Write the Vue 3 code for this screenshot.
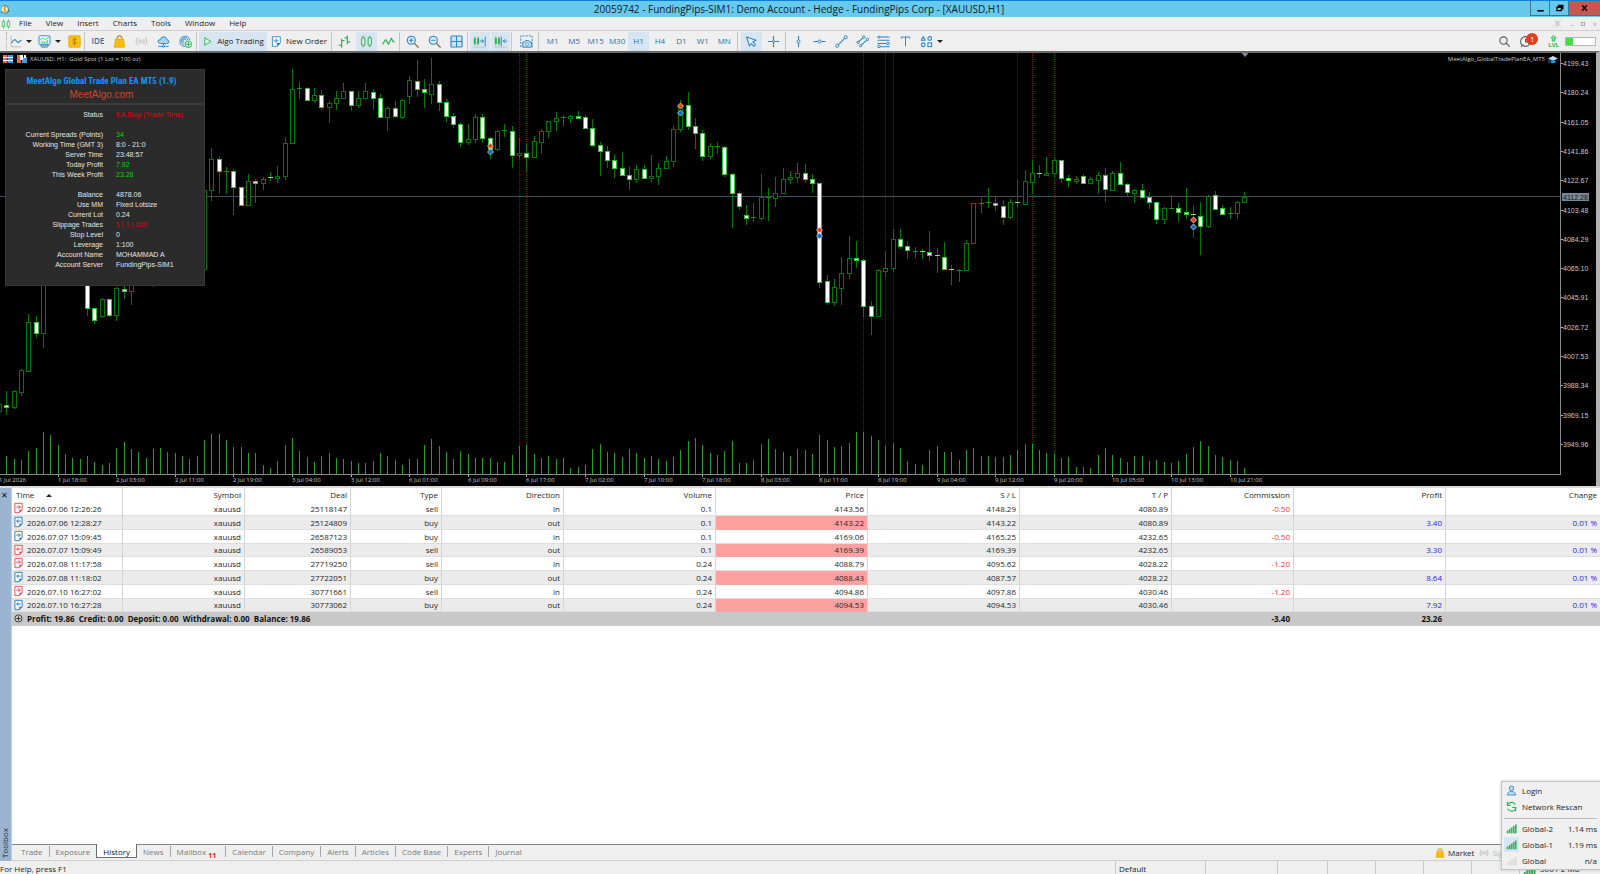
<script setup>
const B = '#2f86c6'
const G = '#2fb457'

const line = (d, c = B, w = 1.3) =>
  `<path d="${d}" fill="none" stroke="${c}" stroke-width="${w}" stroke-linecap="round" stroke-linejoin="round"/>`
const dot = (x, y, r = 1.5, c = B) =>
  `<circle cx="${x}" cy="${y}" r="${r}" fill="#efefef" stroke="${c}" stroke-width="1.2"/>`

const bag =
  '<path d="M5 6V4a3 3 0 0 1 6 0v2" fill="none" stroke="#c99000" stroke-width="1.4"/><path d="M3 5h10l1.500 10h-13z" fill="#f8bc10" stroke="#e0a300" stroke-width=".8"/>'
const waves = (c) =>
  line('M3 3.500Q-.500 8 3 12.500M5.300 5.300Q3.300 8 5.300 10.700M13 3.500Q16.500 8 13 12.500M10.700 5.300Q12.700 8 10.700 10.700', c, 1.1) +
  `<circle cx="8" cy="8" r="1.300" fill="none" stroke="${c}"/>`

const icons = {
  lineChart: line('M2.500 1.500V14.500H15', '#b5b5b5', 1) + line('M3 9.500L7 5.500L11 9.500L15 6.500'),
  screen:
    `<rect x="1.200" y="1" width="13.600" height="11" rx="1.500" fill="#fff" stroke="${B}" stroke-width="1.200"/><path d="M3 12.500h10l-1.500 2.500h-7z" fill="#a8c9e3" stroke="${B}"/>` +
    line('M3 6L6 4L9 5.500L13 2.800', G, 1) + line('M4 10.500v-2M6 10.500v-3M8 10.500v-2M10 10.500v-3M12 10.500v-4', G, 1),
  dollar:
    '<rect x="1" y="1" width="14" height="14" rx="1.500" fill="#fcc20a" stroke="#e3a300"/>' +
    line('M10.500 5.500Q8 4 6 5.500Q5 7.500 8 8Q11 8.500 10 10.500Q8 12 5.500 10.500M8 3.500v9', '#b87c00', 1.1),
  bag,
  signal: waves('#b3b3b3'),
  cloud:
    '<path d="M4 10.500Q1 10 1.200 7.500Q1.800 5.500 4 5.800Q5 2 8.500 2.200Q11.800 2.500 12 5.800Q15 5.800 14.800 8.400Q14.400 10.500 12 10.500z" fill="#a9d7f3" stroke="#2f86c6" stroke-width="1.200"/>' +
    line('M8 10.500v3M2 14h12', B, 1.2) + dot(8, 14, 1.2),
  radar:
    line('M13.500 6A6.300 6.300 0 1 0 7 14.200M11.200 6A4.200 4.200 0 1 0 6 11.500M8.800 6.500A2 2 0 1 0 6.300 9', B, 1.2) +
    `<circle cx="11.500" cy="11.500" r="4" fill="#dff4e4" stroke="${G}" stroke-width="1.200"/>` + line('M11.500 9.300v4.400M9.300 11.500h4.400', G),
  play: '<path d="M4 2.500L13 8L4 13.500z" fill="#e4f6e8" stroke="#2fb457" stroke-width="1.400" stroke-linejoin="round"/>',
  newOrder:
    '<path d="M2 1h11.500v9L9 15H2z" fill="#fff" stroke="#2f86c6" stroke-width="1.300" stroke-linejoin="round"/><path d="M13.500 10L9 15v-5z" fill="#1a5f97"/>' +
    line('M7.500 4v6M4.500 7h6', B),
  bars: line('M4.500 5v10M1.500 12.500h3M4.500 7h3M11.500 1v10M8.500 3.500h3M11.500 8.500h3', G, 1.5),
  candles:
    `<path d="M4 1v14M12 1v14" stroke="${G}" stroke-width="1.200"/><rect x="2" y="3.500" width="4" height="9" rx="1" fill="#e4f4e6" stroke="${G}" stroke-width="1.300"/><rect x="10" y="3.500" width="4" height="9" rx="1" fill="#e4f4e6" stroke="${G}" stroke-width="1.300"/>`,
  zigzag: line('M1 11L4.500 5.500L8 11.500L11.500 4L14 8.500L15 8', G, 1.5),
  zoomIn:
    `<circle cx="6.500" cy="6.500" r="5" fill="#dcecf8" stroke="${B}" stroke-width="1.300"/>` + line('M10.500 10.500L15 15', '#9a6b5a', 1.6) + line('M6.500 4.300v4.400M4.300 6.500h4.400'),
  zoomOut:
    `<circle cx="6.500" cy="6.500" r="5" fill="#dcecf8" stroke="${B}" stroke-width="1.300"/>` + line('M10.500 10.500L15 15', '#9a6b5a', 1.6) + line('M4.300 6.500h4.400'),
  grid: `<rect x="1.200" y="1.200" width="13.600" height="13.600" rx="1" fill="#cfe3f5" stroke="${B}" stroke-width="1.400"/>` + line('M8 1.500v13M1.500 8h13'),
  shiftRight:
    `<rect x="1" y="4" width="2.500" height="7" fill="${G}"/><rect x="5" y="4" width="2.500" height="7" fill="${G}"/>` +
    line('M2.200 2.500v10M6.200 2.500v10', G, 1) + line('M9 7.500h4M11 5.500l2 2l-2 2M15 2.500v11', B, 1.2) + line('M0 15h16', '#b9c3cc', 1),
  shiftLeft:
    `<rect x="1" y="4" width="2.500" height="7" fill="${G}"/><rect x="5" y="4" width="2.500" height="7" fill="${G}"/>` +
    line('M2.200 2.500v10M6.200 2.500v10', G, 1) + line('M9 2.500v11M11.500 7.500h4M13.500 5.500l-2 2l2 2', B, 1.2) + line('M0 15h16', '#b9c3cc', 1),
  camera:
    `<path d="M1 15V1h14v14" fill="none" stroke="${B}" stroke-width="1.200" stroke-dasharray="2.500 1.500"/><path d="M3.500 8.500h2.500l1-1.700h3.500l1 1.700H14v6.500H3.500z" fill="#cfe3f5" stroke="${B}" stroke-width="1.200"/><circle cx="8.700" cy="11.500" r="1.800" fill="#fff" stroke="${B}"/>`,
  cursor: `<path d="M2 2.500L13.500 6.500L9.500 8.500L13 12L11 14L7.700 10.500L5.500 13.500z" fill="#e8f2fa" stroke="${B}" stroke-width="1.300" stroke-linejoin="round"/>`,
  cross: line('M8 1.500v13M1.500 8h13', B, 1.4) + dot(8, 8, 1.2),
  vline: line('M8 1.500v13') + dot(8, 8, 1.9),
  hline: line('M1 8h14') + dot(8, 8, 1.9),
  trend: line('M3 13L13 3') + dot(2.8, 13.2, 1.9) + dot(13.2, 2.8, 1.9),
  channel: line('M2.500 9L9.500 2.500M5.500 13.500L14.500 5') + dot(9.5, 2.7) + dot(2.5, 9) + dot(5.5, 13.2) + dot(14, 5.5),
  fib: line('M1 2.500h14M1 6.500h14M1 10.500h14M1 14.500h14') + dot(13.5, 10.5, 1.6) + dot(2.5, 14, 1.6) + dot(2.5, 2.5, 1.2),
  text: line('M3 4V2.500H13V4M8 2.500v11', B, 1.2),
  shapes:
    line('M4 2L6.500 6.500H1.500z') + `<circle cx="12" cy="4.300" r="2.300" fill="none" stroke="${B}" stroke-width="1.300"/><circle cx="4" cy="12" r="2.300" fill="none" stroke="${B}" stroke-width="1.300"/><rect x="9.700" y="9.700" width="4.600" height="4.600" fill="none" stroke="${B}" stroke-width="1.300"/>`,
  search: line('M10 10L14 14', '#555', 1.4) + '<circle cx="6.800" cy="6.800" r="4.500" fill="none" stroke="#555" stroke-width="1.300"/>',
  chat: '<circle cx="8" cy="8" r="6" fill="#f6f6f6" stroke="#555" stroke-width="1.300"/>' + line('M3 14.500L5 12M8 5v3.500h3', '#555'),
  pin: line('M8 2v4M5 6h6M5 9h6M8 9v5M2 2l12 12M14 2L2 14', '#b8b8b8', 1),
  user:
    '<circle cx="8" cy="4.800" r="3.300" fill="#bfe0f5" stroke="#2f86c6" stroke-width="1.300"/><path d="M2 14.500Q2 9.500 8 9.500Q14 9.500 14 14.500z" fill="#bfe0f5" stroke="#2f86c6" stroke-width="1.300"/>',
  rescan: line('M2 6.500A6.200 6.200 0 0 1 13 4.500M14.500 9.500A6.200 6.200 0 0 1 3 11.500M2 2v4.500h4.500M14 14v-4.500H9.500', G, 1.6),
}

const ladder = (c) => [1, 4, 7, 10, 13].map((x, i) => `<rect x="${x}" y="${11 - i * 2.2}" width="2.400" height="${4 + i * 2.2}" fill="${c}"/>`).join('')
icons.strength = ladder('#2fb457')
icons.strengthOff = ladder('#dcdcdc')

const menus = ['File', 'View', 'Insert', 'Charts', 'Tools', 'Window', 'Help']
const timeframes = ['M1', 'M5', 'M15', 'M30', 'H1', 'H4', 'D1', 'W1', 'MN']
const drawTools = ['vline', 'hline', 'trend', 'channel', 'fib', 'text', 'shapes']

/* Candles: high, body top, body bottom, low, fill (1 = bearish). Three units per pixel. */
const candles = [
  [1063,1063,1084,1084,0],[1024,1064,1071,1094,1],[1020,1024,1071,1078,0],[958,961,1025,1039,0],[793,815,963,965,0],[799,815,850,864,1],
  [560,600,850,895,0],[500,520,600,620,0],[480,500,520,560,1],[480,500,540,560,1],[500,520,560,580,0],[520,540,600,620,1],
  [560,600,775,797,1],[773,775,811,823,1],[745,747,799,803,0],[746,748,795,800,1],[712,715,794,814,0],[700,716,724,747,1],
  [660,680,724,765,0],[640,660,680,700,0],[600,640,660,690,0],[600,640,660,711,1],[580,600,660,680,0],[560,580,600,640,0],
  [540,560,580,620,0],[560,580,620,660,1],[580,600,640,660,0],[600,620,656,670,0],[420,420,656,656,0],
  [294,327,419,453,0],[322,327,364,432,1],[350,364,367,431,0],[358,364,412,494,1],[412,412,465,468,1],[371,392,465,469,0],
  [386,393,398,460,1],[382,387,399,421,0],[367,381,384,392,1],[347,377,383,398,0],[262,280,377,391,0],[58,118,280,282,0],
  [97,113,118,146,0],[110,115,150,152,1],[115,136,150,158,0],[120,136,170,180,1],[152,160,170,220,0],[123,143,160,180,0],
  [99,123,143,146,0],[122,124,166,182,1],[123,143,166,173,0],[100,123,143,151,0],[116,126,143,179,1],[133,143,200,202,1],
  [167,175,200,243,0],[154,175,199,203,1],[148,151,200,208,0],[77,91,139,162,0],[30,93,116,141,1],[88,116,125,174,1],
  [24,102,132,163,0],[94,102,156,182,1],[147,156,197,216,1],[190,197,223,233,1],[217,222,275,290,1],[222,266,275,286,0],
  [191,200,266,279,0],[193,200,265,279,1],[262,264,298,327,1],[239,243,298,302,0],[223,241,244,261,0],[228,242,314,353,1],
  [264,309,314,327,0],[280,308,321,366,1],[257,274,322,323,0],[238,244,275,311,0],[213,214,244,265,0],[186,203,214,242,0],
  [196,202,205,227,0],[196,198,203,218,0],[183,199,203,204,1],[196,202,234,237,1],[208,234,285,290,1],[277,285,304,377,1],
  [289,304,329,353,1],[313,329,353,384,1],[306,353,375,377,1],[351,375,386,419,1],[346,356,388,398,0],[344,356,383,384,1],
  [315,377,383,397,0],[340,353,377,404,0],[318,332,353,354,0],[229,236,332,350,0],[151,166,236,246,0],[127,166,228,239,1],
  [205,227,248,296,1],[240,248,317,333,1],[280,289,317,326,0],[276,289,292,311,0],[288,291,373,381,1],[369,373,430,533,1],
  [424,430,469,480,1],[466,496,505,524,1],[460,502,505,516,0],[372,442,503,511,0],[413,441,444,514,0],[382,430,443,470,0],
  [353,388,430,431,0],[364,381,388,402,0],[339,368,381,398,0],[341,369,387,395,1],[372,388,399,429,1],[399,399,695,715,1],
  [676,694,756,766,1],[687,712,756,769,0],[622,670,713,766,0],[558,624,670,686,0],[573,625,629,655,1],[627,629,767,800,1],
  [753,767,797,855,1],[658,661,798,801,0],[603,654,664,681,0],[536,568,654,662,0],[536,568,587,596,1],[573,587,599,628,1],
  [590,602,605,624,0],[598,604,607,627,1],[543,607,614,633,1],[593,615,619,669,1],[575,620,656,658,1],[645,658,661,706,1],
  [658,659,661,696,0],[569,578,660,663,0],[459,459,578,582,0],[444,458,461,490,0],[415,457,460,473,0],[439,458,466,482,1],
  [450,467,500,525,1],[448,457,502,507,0],[391,456,460,470,1],[361,394,462,465,0],[331,369,395,432,0],[345,369,373,383,1],
  [322,368,374,378,0],[322,329,369,380,0],[330,330,383,398,1],[374,384,391,411,1],[379,388,392,402,0],[373,378,398,399,1],
  [380,388,398,402,0],[365,374,390,431,0],[353,376,418,456,1],[364,369,419,423,0],[336,369,403,406,1],[399,403,426,442,1],
  [418,420,428,459,0],[403,420,442,446,1],[427,442,455,477,1],[455,455,506,521,1],[470,475,507,522,0],[436,474,477,477,0],
  [458,474,486,515,1],[415,486,492,508,1],[465,491,496,563,1],[455,497,529,615,1],[434,437,529,535,0],[424,436,476,476,1],
  [465,475,493,493,1],[471,490,493,506,0],[454,457,490,507,0],[427,440,457,459,0],
]

const volumes = [
  40,53,45,42,70,79,127,116,86,60,49,45,54,36,27,32,78,95,75,66,47,75,78,66,62,53,44,53,103,121,120,101,81,80,64,62,27,18,38,87,109,
  70,50,35,54,64,48,45,40,33,32,39,63,53,42,28,46,45,87,104,85,66,45,69,60,48,48,48,35,36,58,83,88,60,48,54,46,49,18,22,27,75,90,67,
  64,51,75,62,48,53,46,40,51,71,98,109,86,64,58,69,100,33,33,42,91,106,76,67,54,75,73,60,117,101,80,83,93,126,126,114,102,84,92,79,39,
  29,28,73,85,66,66,43,72,78,55,55,51,51,57,71,91,91,72,63,61,49,51,21,21,18,57,78,57,47,36,53,53,39,43,35,32,38,60,80,98,83,58,50,42,40,19,
]

const STEP = 7.325
const px = (i) => Math.round(STEP * i - 1)
const py = (v) => Math.round(v / 3) - 3
const BASE = 421

const bars = candles.map(([h, t, b, l, fill], i) => {
  const top = py(t)
  return { x: px(i), high: py(h), top, h: Math.max(py(b) - top, 1), bottom: Math.max(py(b), top + 1), low: py(l), fill }
})
const volumeBars = volumes.map((v, i) => ({ x: px(i), y: BASE - Math.round(v / 3) }))
const sessions = [71, 72, 118, 121, 122, 139, 141, 144].map(px)
const trades = [[67, 287, 307], [93, 169, 188], [112, 539, 558], [163, 511, 531]].map(([i, a, b]) => ({ x: px(i), sell: py(a), buy: py(b) }))

const times = ['1 Jul 2026','1 Jul 18:00','2 Jul 03:00','2 Jul 11:00','2 Jul 19:00','3 Jul 04:00','3 Jul 12:00','6 Jul 01:00','6 Jul 09:00','6 Jul 17:00','7 Jul 02:00','7 Jul 10:00','7 Jul 18:00','8 Jul 03:00','8 Jul 11:00','8 Jul 19:00','9 Jul 04:00','9 Jul 12:00','9 Jul 20:00','10 Jul 05:00','10 Jul 13:00','10 Jul 21:00']
  .map((label, k) => ({ label, x: px(k * 8) }))
const prices = ['4199.43','4180.24','4161.05','4141.86','4122.67','4103.48','4084.29','4065.10','4045.91','4026.72','4007.53','3988.34','3969.15','3949.96']
  .map((label, k) => ({ label, y: Math.round(11 + k * 29.3) }))

const panel = [
  ['Status', 'EA Stop (Trade Time)', 'red'], null,
  ['Current Spreads (Points)', '34', 'green'],
  ['Working Time (GMT 3)', '8:0 - 21:0'],
  ['Server Time', '23:48:57'],
  ['Today Profit', '7.92', 'green'],
  ['This Week Profit', '23.26', 'green'], null,
  ['Balance', '4878.06'],
  ['Use MM', 'Fixed Lotsize'],
  ['Current Lot', '0.24'],
  ['Slippage Trades', '1 | 1 | 100', 'red'],
  ['Stop Level', '0'],
  ['Leverage', '1:100'],
  ['Account Name', 'MOHAMMAD A'],
  ['Account Server', 'FundingPips-SIM1'],
]

const columns = ['Symbol', 'Deal', 'Type', 'Direction', 'Volume', 'Price', 'S / L', 'T / P', 'Commission', 'Profit', 'Change']
const deals = [
  ['2026.07.06 12:26:26', '25118147', 'sell', 'in', '0.1', '4143.56', '4148.29', '4080.89', '-0.50', '', ''],
  ['2026.07.06 12:28:27', '25124809', 'buy', 'out', '0.1', '4143.22', '4143.22', '4080.89', '', '3.40', '0.01 %'],
  ['2026.07.07 15:09:45', '26587123', 'buy', 'in', '0.1', '4169.06', '4165.25', '4232.65', '-0.50', '', ''],
  ['2026.07.07 15:09:49', '26589053', 'sell', 'out', '0.1', '4169.39', '4169.39', '4232.65', '', '3.30', '0.01 %'],
  ['2026.07.08 11:17:58', '27719250', 'sell', 'in', '0.24', '4088.79', '4095.62', '4028.22', '-1.20', '', ''],
  ['2026.07.08 11:18:02', '27722051', 'buy', 'out', '0.24', '4088.43', '4087.57', '4028.22', '', '8.64', '0.01 %'],
  ['2026.07.10 16:27:02', '30771661', 'sell', 'in', '0.24', '4094.86', '4097.86', '4030.46', '-1.20', '', ''],
  ['2026.07.10 16:27:28', '30773062', 'buy', 'out', '0.24', '4094.53', '4094.53', '4030.46', '', '7.92', '0.01 %'],
]

const tabs = ['Trade', 'Exposure', 'History', 'News', 'Mailbox', 'Calendar', 'Company', 'Alerts', 'Articles', 'Code Base', 'Experts', 'Journal']
const servers = [
  { name: 'Global-2', ping: '1.14 ms', icon: 'strength' },
  { name: 'Global-1', ping: '1.19 ms', icon: 'strength', on: true },
  { name: 'Global', ping: 'n/a', icon: 'strengthOff' },
]
</script>

<template>
  <div class="app">
    <header class="titlebar">
      <svg class="coin" viewBox="0 0 16 16" aria-hidden="true">
        <path d="M2 14L3 5L8 1L13 4L15 12L10 15z" fill="#2d6f8f" />
        <circle cx="7.500" cy="8.500" r="5.500" fill="#fff3cf" stroke="#c8962a" />
        <path d="M9.500 6Q7.500 5 6 6.300Q5.500 8 7.700 8.500Q10 9.200 9 11Q7.500 12 5.500 11M7.500 4.500v8" fill="none" stroke="#b8801a" stroke-width="1.200" />
      </svg>
      <h1>20059742 - FundingPips-SIM1: Demo Account - Hedge - FundingPips Corp - [XAUUSD,H1]</h1>
      <div class="winbtns">
        <button aria-label="Minimize"><svg viewBox="0 0 10 10"><path d="M1 7.500h8v2H1z" /></svg></button>
        <button aria-label="Restore"><svg viewBox="0 0 10 10"><path d="M3 1h7v6H8v2H1V3h2zM2.500 5v2.500h4V5z" fill-rule="evenodd" /></svg></button>
        <button class="close" aria-label="Close"><svg viewBox="0 0 10 10"><path d="M2 1.500l6 7M8 1.500l-6 7" stroke="#111" stroke-width="2" /></svg></button>
      </div>
    </header>

    <nav class="menubar">
      <svg class="ico" viewBox="0 0 16 16" v-html="icons.candles" />
      <button v-for="m in menus" :key="m">{{ m }}</button>
      <div class="mdi">
        <button aria-label="Unpin"><svg class="ico" viewBox="0 0 16 16" v-html="icons.pin" /></button>
        <button aria-label="Minimize chart">–</button>
        <button aria-label="Restore chart"><i class="restore"></i></button>
        <button aria-label="Close chart">×</button>
      </div>
    </nav>

    <div class="toolbar">
      <span class="grip"></span>
      <div class="g charts">
        <button aria-label="Chart type"><svg class="ico" viewBox="0 0 16 16" v-html="icons.lineChart" /><i class="caret"></i></button>
        <button aria-label="Profiles"><svg class="ico" viewBox="0 0 16 16" v-html="icons.screen" /><i class="caret"></i></button>
        <button aria-label="Symbols"><svg class="ico" viewBox="0 0 16 16" v-html="icons.dollar" /></button>
      </div>
      <div class="g services">
        <button class="tf ide">IDE</button>
        <button v-for="n in ['bag', 'signal', 'cloud', 'radar']" :key="n" :aria-label="n"><svg class="ico" viewBox="0 0 16 16" v-html="icons[n]" /></button>
      </div>
      <div class="g trading">
        <button class="on"><svg class="ico small" viewBox="0 0 16 16" v-html="icons.play" />Algo Trading</button>
        <button><svg class="ico small" viewBox="0 0 16 16" v-html="icons.newOrder" />New Order</button>
      </div>
      <div class="g three">
        <button v-for="n in ['bars', 'candles', 'zigzag']" :key="n" :class="{ on: n === 'candles' }" :aria-label="n"><svg class="ico" viewBox="0 0 16 16" v-html="icons[n]" /></button>
      </div>
      <div class="g three">
        <button v-for="n in ['zoomIn', 'zoomOut', 'grid']" :key="n" :aria-label="n"><svg class="ico" viewBox="0 0 16 16" v-html="icons[n]" /></button>
      </div>
      <div class="g two">
        <button v-for="n in ['shiftRight', 'shiftLeft']" :key="n" class="on" :aria-label="n"><svg class="ico" viewBox="0 0 16 16" v-html="icons[n]" /></button>
      </div>
      <div class="g one">
        <button aria-label="Screenshot"><svg class="ico" viewBox="0 0 16 16" v-html="icons.camera" /></button>
      </div>
      <div class="g frames">
        <button v-for="t in timeframes" :key="t" class="tf" :class="{ on: t === 'H1' }">{{ t }}</button>
      </div>
      <div class="g two">
        <button v-for="n in ['cursor', 'cross']" :key="n" :class="{ on: n === 'cursor' }" :aria-label="n"><svg class="ico" viewBox="0 0 16 16" v-html="icons[n]" /></button>
      </div>
      <div class="g draw">
        <button v-for="n in drawTools" :key="n" :aria-label="n"><svg class="ico" viewBox="0 0 16 16" v-html="icons[n]" /></button>
      </div>
      <i class="caret"></i>
      <div class="right">
        <button aria-label="Search"><svg class="ico" viewBox="0 0 16 16" v-html="icons.search" /></button>
        <button class="chat" aria-label="Messages"><svg class="ico" viewBox="0 0 16 16" v-html="icons.chat" /><b>1</b></button>
        <span class="lvl"><svg viewBox="0 0 10 8"><path d="M5 .500L8 3.500H6.300V7H3.700V3.500H2z" fill="#9be0a8" stroke="#2fb457" /></svg>LVL</span>
        <span class="meter"><i></i></span>
      </div>
    </div>

    <main class="chart">
      <div class="plotrow">
        <div class="plotwrap">
          <svg class="plot" aria-label="XAUUSD H1 candles" role="img">
            <line v-for="x in sessions" :key="'s' + x" :x1="x + 0.5" :x2="x + 0.5" y1="0" :y2="BASE" class="session" />
            <line x1="0" x2="100%" y1="143.500" y2="143.500" class="bid" />
            <rect v-for="v in volumeBars" :key="'v' + v.x" :x="v.x" :y="v.y" width="1" :height="BASE - v.y" fill="#23a023" />
            <g v-for="b in bars" :key="b.x">
              <rect :x="b.x" :y="b.high" width="1" :height="Math.max(b.top - b.high, 0)" fill="#007a00" />
              <rect :x="b.x" :y="b.bottom" width="1" :height="Math.max(b.low - b.bottom, 0)" fill="#007a00" />
              <rect v-if="b.fill && b.h > 1" :x="b.x - 1.500" :y="b.top + 0.500" width="4" :height="b.h" fill="#fff" stroke="#2fc42f" />
              <rect v-else-if="b.h > 1" :x="b.x - 1.500" :y="b.top + 0.500" width="4" :height="b.h" fill="#000" stroke="#007a00" />
              <rect v-else :x="b.x - 2" :y="b.top" width="5" height="1" :fill="b.fill ? '#7fe07f' : '#00a000'" />
            </g>
            <g v-for="t in trades" :key="'t' + t.x">
              <path :d="`M${t.x + 0.5} ${t.sell - 3}l3 3l-3 3l-3-3z`" fill="#e8401c" stroke="#f3c9bb" stroke-width=".8" />
              <path :d="`M${t.x + 0.5} ${t.buy - 3}l3 3l-3 3l-3-3z`" fill="#1668c4" stroke="#b5d3ee" stroke-width=".8" />
            </g>
            <path d="M1241.500 0h7l-3.500 4z" fill="#7b8b9e" />
          </svg>
          <div class="symbol">
            <svg class="flags" viewBox="0 0 24 9" aria-hidden="true">
              <rect width="4.500" height="8" fill="#e8625a" /><rect x="5" width="5" height="8" fill="#3f9be0" />
              <path d="M0 2.500h10M0 5.500h10" stroke="#fff" /><rect x="14" width="4" height="8" fill="#e8625a" />
              <rect x="19" y="2" width="5" height="6" fill="#3f9be0" /><path d="M17 0h3v5h-3zM21 0h2v3h-2z" fill="#fff" />
            </svg>
            XAUUSD, H1:&nbsp; Gold Spot (1 Lot = 100 oz)
          </div>
          <div class="expert">
            MeetAlgo_GlobalTradePlanEA_MT5
            <svg viewBox="0 0 12 10" aria-hidden="true"><path d="M6 0l6 3l-6 3l-6-3z" fill="#bfe4ff" /><path d="M3 5v3q3 2 6 0V5l-3 1.500z" fill="#2a96e8" /><path d="M1 3.500v5" stroke="#2a96e8" /></svg>
          </div>
          <section class="panel">
            <h2>MeetAlgo Global Trade Plan EA MT5 (1.9)</h2>
            <p class="site">MeetAlgo.com</p>
            <dl>
              <div v-for="(r, i) in panel" :key="i" :class="{ gap: !r }">
                <template v-if="r"><dt>{{ r[0] }}</dt><dd :class="r[2]">{{ r[1] }}</dd></template>
              </div>
            </dl>
          </section>
        </div>
        <svg class="prices">
          <g v-for="p in prices" :key="p.label">
            <rect x="0" :y="p.y - 1" width="2" height="1" fill="#aaa" />
            <text x="2" :y="p.y + 2">{{ p.label }}</text>
          </g>
          <rect x="1" y="140" width="27" height="8" fill="#77889a" />
          <text x="2" y="147" class="now">4112.28</text>
        </svg>
      </div>
      <svg class="times">
        <g v-for="t in times" :key="t.label">
          <rect :x="t.x" y="0" width="1" height="2" fill="#aaa" />
          <text :x="t.x" y="7">{{ t.label }}</text>
        </g>
      </svg>
    </main>

    <section class="toolbox">
      <aside class="strip">
        <button aria-label="Close toolbox">✕</button>
        <span>Toolbox</span>
      </aside>
      <div class="body">
        <div class="grid">
          <table>
            <colgroup>
              <col class="w111" /><col class="w122" /><col class="w106" /><col class="w91" /><col class="w122" />
              <col class="w152" /><col class="w152" /><col class="w152" /><col class="w152" /><col class="w122" /><col class="w152" /><col />
            </colgroup>
            <thead>
              <tr><th class="time">Time <i></i></th><th v-for="c in columns" :key="c">{{ c }}</th></tr>
            </thead>
            <tbody>
              <tr v-for="d in deals" :key="d[1]">
                <td class="when" :class="d[2]">
                  <svg viewBox="0 0 10 12" aria-hidden="true">
                    <path d="M1 .800h8v7.200L6 11.200H1z" fill="#fff" stroke="currentColor" />
                    <path d="M9 8L6 11.200V8z" fill="currentColor" />
                    <path :d="d[3] === 'in' ? 'M2.500 5h4.500M5 3l2 2l-2 2' : 'M7.500 5H3M5 3L3 5l2 2'" fill="none" stroke="currentColor" />
                  </svg><span>{{ d[0] }}</span>
                </td>
                <td>xauusd</td><td>{{ d[1] }}</td><td>{{ d[2] }}</td><td>{{ d[3] }}</td><td>{{ d[4] }}</td>
                <td :class="{ hit: d[3] === 'out' }">{{ d[5] }}</td><td>{{ d[6] }}</td><td>{{ d[7] }}</td>
                <td class="loss">{{ d[8] }}</td><td class="gain">{{ d[9] }}</td><td class="gain">{{ d[10] }}</td>
              </tr>
            </tbody>
            <tfoot>
              <tr>
                <td colspan="9" class="sum">
                  <svg viewBox="0 0 10 10" aria-hidden="true"><circle cx="5" cy="5" r="4" fill="none" stroke="#333" /><path d="M5 2.500v5M2.500 5h5" stroke="#333" /></svg>
                  <span>Profit: 19.86&nbsp; Credit: 0.00&nbsp; Deposit: 0.00&nbsp; Withdrawal: 0.00&nbsp; Balance: 19.86</span>
                </td>
                <td>-3.40</td><td>23.26</td><td></td>
              </tr>
            </tfoot>
          </table>
        </div>
        <div class="tabs">
          <button v-for="t in tabs" :key="t" :class="{ active: t === 'History' }">{{ t }}<sub v-if="t === 'Mailbox'">11</sub></button>
          <div class="links">
            <a href="#market"><svg class="ico" viewBox="0 0 16 16" v-html="icons.bag" />Market</a>
            <a href="#signals" class="dim"><svg class="ico" viewBox="0 0 16 16" v-html="icons.signal" />Signals</a>
          </div>
        </div>
      </div>
    </section>

    <footer class="status">
      <span class="help">For Help, press F1</span>
      <span class="c90">Default</span><span class="c72"></span><span class="c50"></span><span class="c48"></span>
      <span class="c48"></span><span class="c48"></span><span class="c48"></span>
      <span class="net"><svg class="ico" viewBox="0 0 16 16" v-html="icons.strength" />500 / 2 Mb</span>
    </footer>

    <div class="popup">
      <button><svg class="ico" viewBox="0 0 16 16" v-html="icons.user" />Login</button>
      <button><svg class="ico" viewBox="0 0 16 16" v-html="icons.rescan" />Network Rescan</button>
      <hr />
      <button v-for="s in servers" :key="s.name" :class="{ sel: s.on }">
        <svg class="ico" viewBox="0 0 16 16" v-html="icons[s.icon]" />{{ s.name }}<em>{{ s.ping }}</em>
      </button>
    </div>
  </div>
</template>

<style>
html, body { margin: 0; overflow: hidden; }
</style>

<style scoped>
.app {
  position: relative; display: flex; flex-direction: column; height: 100vh; overflow: hidden;
  background: #efefef; color: #1c1c1c; font: 8px/12px "Open Sans", "Noto Sans", sans-serif;
}
.app * { box-sizing: border-box; }
button { border: 0; padding: 0; margin: 0; background: none; font: inherit; color: inherit; }
svg { display: block; flex: none; }
.ico { width: 13px; height: 13px; }
.small { width: 11px; height: 11px; }

.titlebar { flex: none; display: flex; align-items: center; height: 17px; border-top: 1px solid #0c80d8; background: #67caec; }
.coin { width: 10px; height: 12px; }
h1 { flex: 1; margin: 0; padding-left: 58px; font-size: 10px; line-height: 16px; font-weight: 400; text-align: center; color: #10202a; white-space: nowrap; }
.winbtns { display: flex; align-self: flex-start; }
.winbtns button { width: 19px; height: 15px; display: grid; place-items: center; border: 1px solid #35788f; border-top: 0; border-right: 0; }
.winbtns .close { width: 32px; background: #c75850; }
.winbtns svg { width: 9px; height: 8px; }

.menubar { flex: none; display: flex; align-items: center; height: 14px; border-bottom: 1px solid #cfcfcf; }
.menubar .ico { width: 10px; height: 10px; margin: 0 1px; }
.menubar > button { padding: 0 7px 1px; }
.mdi { margin-left: auto; display: flex; align-items: center; gap: 7px; padding-right: 3px; color: #a8a8a8; }
.mdi .ico { width: 9px; height: 9px; }
.restore { display: block; width: 4px; height: 4px; border: 1px solid #a8a8a8; }

.toolbar { flex: none; display: flex; align-items: center; height: 20px; }
.grip { width: 7px; height: 18px; border-right: 1px dotted #aaa; }
.g { display: grid; grid-auto-flow: column; grid-auto-columns: 1fr; height: 19px; padding-left: 2px; border-right: 1px solid #c4c4c4; }
.g button { display: flex; align-items: center; justify-content: center; gap: 4px; white-space: nowrap; }
.g .on { background: #d7e4f1; }
.charts { width: 78px; padding-left: 0; grid-template-columns: 27px 30px 20px; }
.services { width: 112px; }
.trading { width: 135px; grid-template-columns: 68px 64px; grid-auto-columns: auto; }
.three { width: 68px; }
.two { width: 44px; }
.two button { margin-right: 1px; }
.one { width: 27px; }
.frames { width: 199px; padding-left: 3px; padding-right: 2px; }
.frames + .two { width: 48px; padding-left: 3px; }
.tf { color: #2b6fa3; }
.ide { font-weight: 600; }
.draw { width: 151px; border: 0; }
.caret { width: 0; height: 0; border: 3px solid transparent; border-top-color: #222; border-bottom: 0; }
.right { margin-left: auto; display: flex; align-items: center; padding-right: 4px; gap: 8px; }
.chat { position: relative; padding-right: 8px; }
.chat b { position: absolute; left: 7px; top: -2px; width: 12px; height: 12px; border-radius: 6px; background: #e23c20; color: #fff; font-weight: 400; line-height: 12px; }
.lvl { display: flex; flex-direction: column; align-items: center; font-size: 6px; line-height: 6px; font-weight: 700; color: #2fb457; }
.lvl svg { width: 9px; height: 7px; }
.right .meter { width: 31px; height: 9px; margin-left: -2px; border: 1px solid #b5b5b5; background: #fff; }
.meter i { display: block; width: 7px; height: 7px; background: #3fe03f; }

.chart { flex: none; border-top: 2px solid #686868; border-right: 4px solid #b2b2b2; background: #000; color: #c8c8c8; font: 7px/9px "Liberation Sans", sans-serif; }
.plotrow { display: flex; }
.plotwrap { position: relative; flex: 1; border-right: 1px solid #8a8a8a; border-bottom: 1px solid #8a8a8a; }
.plot { width: 100%; height: 421px; }
.session { stroke: #a00000; stroke-dasharray: 1 1; }
.bid { stroke: #454f5c; }
.prices { width: 35px; height: 422px; }
.times { width: 100%; height: 11px; }
text { fill: #c8c8c8; }
.times text, .symbol, .expert { font-family: "Open Sans", sans-serif; font-size: 6px; }
.prices .now { fill: #101820; }
.symbol { position: absolute; left: 3px; top: 2px; display: flex; align-items: center; gap: 3px; white-space: nowrap; }
.flags { width: 24px; height: 9px; }
.expert { position: absolute; right: 2px; top: 2px; display: flex; align-items: center; gap: 3px; }
.expert svg { width: 10px; height: 8px; }
.panel { position: absolute; left: 5px; top: 16px; width: 200px; height: 217px; background: #2b2b2b; border: 1px solid #383838; color: #e4e4e4; }
h2 { margin: 0; padding: 5px 7px 0 0; text-align: center; color: #1493f5; font: 700 9px/12px Impact, "Liberation Sans Narrow", "Roboto Condensed", "Liberation Sans", sans-serif; white-space: nowrap; }
.site { margin: 0; height: 18px; padding-right: 7px; border-bottom: 2px solid #3b3b3b; text-align: center; color: #c8492a; font-size: 10px; line-height: 15px; }
dl { margin: 5px 0 0; }
dl div { display: grid; grid-template-columns: 97px 1fr; column-gap: 13px; height: 10px; line-height: 10px; }
dl .gap + div { margin-top: 0; }
dt { text-align: right; }
dd { margin: 0; }
.red { color: #d80c0c; }
.green { color: #10d010; }

.toolbox { flex: 1; display: flex; min-height: 0; border-top: 2px solid #ddd6da; }
.strip { width: 12px; display: flex; flex-direction: column; align-items: flex-start; justify-content: space-between; padding: 1px 0 3px 1px; background: #9bb4d2; border-right: 1px solid #c3cfdd; }
.strip button { color: #111; }
.strip span { width: 8px; line-height: 8px; writing-mode: vertical-rl; transform: rotate(180deg); color: #1e2e40; }
.body { flex: 1; min-width: 0; display: flex; flex-direction: column; }
.grid { flex: 1; background: #fff; }
table { width: 100%; table-layout: fixed; border-collapse: separate; border-spacing: 0; color: #262626; }
.w91 { width: 91px; } .w106 { width: 106px; } .w111 { width: 111px; } .w122 { width: 122px; } .w152 { width: 152px; }
tr { height: 14px; }
tbody tr:nth-child(4n) { height: 13px; }
tbody tr:nth-child(even) { background: #ebebeb; }
th, td { padding: 0 3px 0 0; text-align: right; font-weight: 400; line-height: 12px; border-right: 1px solid #d4d4d4; white-space: nowrap; }
td { border-bottom: 1px solid #dedede; }
th { padding-right: 3px; line-height: 14px; }
th:last-child, td:last-child { border-right: 0; }
.time { text-align: left; padding-left: 4px; }
.time i { display: inline-block; margin-left: 10px; border: 3px solid transparent; border-bottom-color: #222; border-top: 0; vertical-align: middle; }
.when { text-align: left; position: relative; padding-left: 15px; }
.when svg { position: absolute; left: 2px; top: 0; width: 9px; height: 12px; }
.when span { color: #262626; }
td.sell { color: #e34141; }
td.buy { color: #1f72b8; }
.hit { background: #ffa0a0; border-bottom-color: #ffa0a0; }
.loss { color: #ff3030; }
.gain { color: #2a24f0; }
tfoot tr { background: #c8c8c8; }
tfoot td { border: 0; padding-right: 4px; font-weight: 700; line-height: 14px; color: #111; }
.sum { position: relative; text-align: left; padding-left: 15px; }
.sum svg { position: absolute; left: 2px; top: 2px; width: 9px; height: 9px; }

.tabs { flex: none; display: flex; align-items: flex-start; height: 17px; border-top: 1px solid #858585; border-bottom: 1px solid #cfcfcf; padding-left: 3px; color: #7a7a7a; }
.tabs > button { height: 11px; margin-top: 1px; padding: 0 6px; line-height: 11px; border-right: 1px solid #a5a5a5; white-space: nowrap; }
.tabs > button:nth-child(2), .tabs > button:nth-child(12) { border-right: 0; }
.tabs > .active { height: 14px; margin-top: -1px; line-height: 15px; background: #fff; color: #111; border: 1px solid #6c6c6c; border-top: 0; padding: 0 6px; }
sub { margin: 0 3px 0 2px; font-size: 7px; font-weight: 700; line-height: 7px; color: #e22222; }
.links { margin-left: auto; margin-right: 99px; display: flex; width: 66px; overflow: hidden; white-space: nowrap; }
.links a { display: flex; flex: none; align-items: center; gap: 3px; margin-right: 5px; height: 15px; color: #222; text-decoration: none; }
.links .ico { width: 10px; height: 10px; }
.links .dim { color: #b8b8b8; }

.status { flex: none; display: flex; height: 13px; overflow: hidden; line-height: 16px; }
.status .help { flex: 1; }
.status span + span { border-left: 1px solid #c9c9c9; padding-left: 3px; }
.c90 { width: 90px; } .c72 { width: 72px; } .c50 { width: 50px; } .c48 { width: 48px; }
.net { width: 81px; display: flex; align-items: center; gap: 4px; padding-top: 3px; white-space: nowrap; }

.popup { position: absolute; right: 0; bottom: 4px; width: 99px; height: 89px; padding: 1px 3px 0 2px; background: #f0f0f0; border: 1px solid #c4c4c4; border-right: 0; box-shadow: 0 0 3px #0003; }
.popup button { display: flex; align-items: center; width: 100%; height: 16px; gap: 3px; padding-bottom: 1px; white-space: nowrap; }
.popup .ico { width: 15px; height: 15px; padding: 2px; }
.popup .sel .ico { background: #d7e6f4; }
.popup em { margin-left: auto; font-style: normal; }
hr { height: 1px; margin: 3px 0 2px; border: 0; background: #bdbdbd; }
</style>
